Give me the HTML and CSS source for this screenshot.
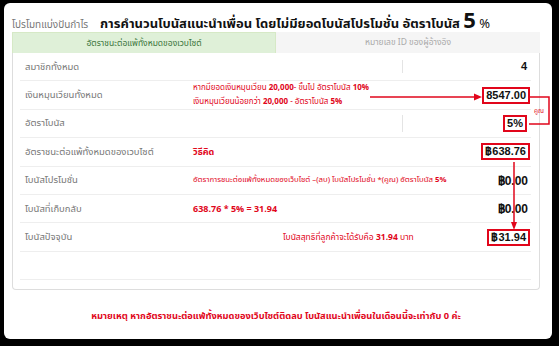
FILE: index.html
```html
<!DOCTYPE html>
<html lang="th">
<head>
  <meta charset="UTF-8" />
  <meta name="viewport" content="width=device-width, initial-scale=1.0" />
  <title>โบนัสแนะนำเพื่อน</title>
  <link rel="stylesheet" href="styles.css">
</head>
<body>
  <div class="frame">
    <!-- header -->
    <div class="head">
      <span class="crumb">โปรโมทแบ่งปันกำไร</span>
      <h1 class="title">การคำนวนโบนัสแนะนำเพื่อน โดยไม่มียอดโบนัสโปรโมชั่น อัตราโบนัส <span class="big">5</span> <span class="pct">%</span></h1>
    </div>

    <!-- tabs -->
    <div class="tabs">
      <div class="tab active">อัตราชนะต่อแพ้ทั้งหมดของเวบไซต์</div>
      <div class="tab">หมายเลข ID ของผู้อ้างอิง</div>
    </div>

    <!-- table -->
    <div class="panel">
      <div class="row split">
        <div class="label">สมาชิกทั้งหมด</div>
        <div class="note"></div>
        <div class="val">4</div>
      </div>
      <div class="row">
        <div class="label">เงินหมุนเวียนทั้งหมด</div>
        <div class="note small">
          <div>หากมียอดเงินหมุนเวียน <b>20,000</b>- ขึ้นไป อัตราโบนัส <b>10%</b></div>
          <div>เงินหมุนเวียนน้อยกว่า <b>20,000</b> - อัตราโบนัส <b>5%</b></div>
        </div>
        <div class="val"><span class="box">8547.00</span></div>
      </div>
      <div class="row split">
        <div class="label">อัตราโบนัส</div>
        <div class="note"></div>
        <div class="val"><span class="box">5%</span></div>
      </div>
      <div class="row">
        <div class="label">อัตราชนะต่อแพ้ทั้งหมดของเวบไซต์</div>
        <div class="note how">วิธีคิด</div>
        <div class="val"><span class="box">฿638.76</span></div>
      </div>
      <div class="row">
        <div class="label">โบนัสโปรโมชั่น</div>
        <div class="note">อัตราการชนะต่อแพ้ทั้งหมดของเว็บไซต์ –(ลบ) โบนัสโปรโมชั่น *(คูณ) อัตราโบนัส <b>5%</b></div>
        <div class="val plain">฿0.00</div>
      </div>
      <div class="row">
        <div class="label">โบนัสที่เก็บกลับ</div>
        <div class="note calc">638.76 * 5% = 31.94</div>
        <div class="val plain">฿0.00</div>
      </div>
      <div class="row">
        <div class="label">โบนัสปัจจุบัน</div>
        <div class="note shifted">โบนัสสุทธิที่ลูกค้าจะได้รับคือ <b>31.94</b> บาท</div>
        <div class="val"><span class="box">฿31.94</span></div>
      </div>
      <div class="row"></div>
    </div>

    <p class="remark">หมายเหตุ หากอัตราชนะต่อแพ้ทั้งหมดของเว็บไซต์ติดลบ โบนัสแนะนำเพื่อนในเดือนนี้จะเท่ากับ 0 ค่ะ</p>
  </div>

  <!-- red annotation marks drawn over the table -->
  <svg class="marks" width="559" height="346" viewBox="0 0 559 346">
    <line x1="370" y1="97" x2="476" y2="97" stroke="#e1061b" stroke-width="1.5" />
    <polygon points="482,97 474,93.5 474,100.5" fill="#e1061b" />
    <polyline points="530,97 549,97 549,124 529,124" fill="none" stroke="#e1061b" stroke-width="1.5" />
    <text x="534" y="113" class="mark-text">คูณ</text>
    <line x1="514" y1="162" x2="514" y2="224" stroke="#e1061b" stroke-width="1.5" />
    <polygon points="514,230 511,222 517,222" fill="#e1061b" />
  </svg>
</body>
</html>
```

FILE: styles.css
```css
body {
  margin: 0;
  background-color: #000;
  font-family: "Noto Sans Thai", "Noto Sans", "DejaVu Sans", sans-serif;
  position: relative;
}
.frame {
  margin: 3px 7px 7px 4px;
  height: 336px;
  box-sizing: border-box;
  background-color: #fff;
  border-radius: 6px;
  padding: 0 12px 0 8px;
}
.head {
  display: flex;
  align-items: baseline;
  height: 29px;
  padding-top: 2px;
  box-sizing: border-box;
}
.crumb {
  font-size: 10px;
  color: #777;
  width: 88px;
  flex: none;
}
.title {
  margin: 0;
  font-size: 13px;
  font-weight: bold;
  color: #111;
  white-space: nowrap;
}
.title .big {
  font-size: 22px;
}
.title .pct {
  font-weight: normal;
  font-size: 13px;
}
.tabs {
  display: grid;
  grid-template-columns: 1fr 1fr;
  height: 21px;
}
.tab {
  display: flex;
  align-items: center;
  justify-content: center;
  font-size: 8.5px;
  color: #aaa;
  background-color: #f5f5f5;
}
.tab.active {
  background-color: #dff0d8;
  color: #3c763d;
  border: 1px solid #d6e9c6;
  border-bottom: none;
}
.panel {
  border: 1px solid #ddd;
  border-top: none;
  border-radius: 0 0 4px 4px;
  padding: 0 8px 9px 7px;
  height: 237px;
  box-sizing: border-box;
}
.row {
  display: flex;
  align-items: center;
  height: 28.4px;
  box-sizing: border-box;
  border-bottom: 1px solid #eee;
  padding-right: 1px;
}
.label {
  width: 173px;
  flex: none;
  padding-left: 5px;
  box-sizing: border-box;
  font-size: 9.5px;
  color: #777;
}
.note {
  flex: 1;
  font-size: 7.8px;
  color: #e1061b;
}
.note.small {
  font-size: 8px;
  line-height: 14px;
}
.note.how {
  font-size: 9px;
  font-weight: bold;
}
.note.calc {
  font-size: 9px;
  font-weight: bold;
}
.note.shifted {
  padding-left: 90px;
  font-size: 8.5px;
}
.val {
  flex: none;
  text-align: right;
  font-family: "Liberation Sans", Arial, sans-serif;
  font-size: 11px;
  font-weight: bold;
  color: #111;
}
.split .val {
  width: 128px;
  border-left: 1px solid #e4e4e4;
  line-height: 13px;
  padding-right: 3px;
  box-sizing: border-box;
}
.val.plain {
  font-size: 12px;
  padding-right: 2px;
}
.box {
  display: inline-block;
  border: 2px solid #e1061b;
  padding: 0 2px;
  line-height: 13px;
}
.remark {
  margin: 19px 0 0;
  text-align: center;
  font-size: 9.3px;
  font-weight: bold;
  color: #e1061b;
}
.marks {
  position: absolute;
  top: 0;
  left: 0;
  pointer-events: none;
}
.mark-text {
  font-size: 6.5px;
  fill: #e1061b;
  font-family: "Noto Sans Thai", "Noto Sans", sans-serif;
}
```
